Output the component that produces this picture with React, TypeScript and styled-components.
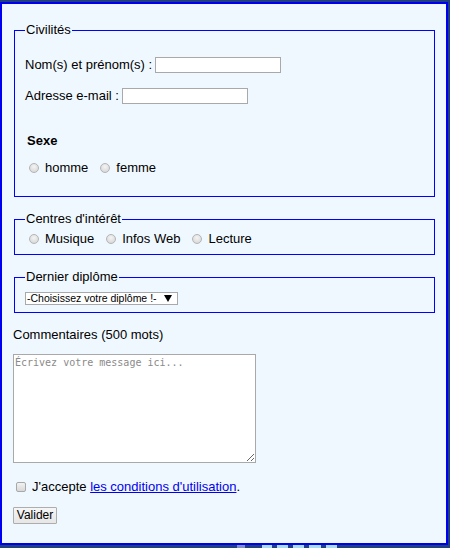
import { FC } from "react";
import styled, { createGlobalStyle } from "styled-components";

const GlobalStyle = createGlobalStyle`
  html, body {
    margin: 0;
    padding: 0;
    background-color: #22407e;
  }
  body {
    font-family: "Liberation Sans", Arial, sans-serif;
    font-size: 13px;
    color: #000;
  }
`;

const Page = styled.div`
  width: 450px;
  height: 548px;
  overflow: hidden;
  padding-top: 2px;
  box-sizing: border-box;
`;

const Panel = styled.form`
  width: 448px;
  height: 543px;
  box-sizing: border-box;
  background-color: #f0f8ff;
  border: 2px solid #0000f0;
  padding: 18px 11px 0 11px;
  display: flex;
  flex-direction: column;
  align-items: flex-start;
`;

const Fieldset = styled.fieldset<{ $top: number; $bottom: number }>`
  align-self: stretch;
  margin: ${(p) => p.$top}px 0 0 1px;
  padding: 0 10px ${(p) => p.$bottom}px 10px;
  border: 1px solid #0000ff;
  min-width: 0;
`;

const Legend = styled.legend`
  padding: 0 1px;
  margin-left: 0;
  line-height: 16px;
  font-size: 13px;
`;

const FieldRow = styled.div<{ $top: number }>`
  display: flex;
  align-items: center;
  height: 17px;
  margin-top: ${(p) => p.$top}px;
  line-height: 16px;
`;

const TextInput = styled.input`
  width: 126px;
  height: 16px;
  box-sizing: border-box;
  margin: 0 0 0 3px;
  border: 1px solid #a9a9a9;
  background: #fff;
  padding: 0 2px;
  font-size: 12px;
`;

const SubTitle = styled.div`
  margin: 29px 0 0 2px;
  font-weight: bold;
  line-height: 16px;
`;

const OptionRow = styled.div<{ $top: number }>`
  display: flex;
  align-items: center;
  height: 16px;
  margin-top: ${(p) => p.$top}px;
  line-height: 16px;
`;

const Option = styled.label`
  display: inline-flex;
  align-items: center;
  margin-right: 8px;
`;

const Radio = styled.input`
  appearance: none;
  width: 10px;
  height: 10px;
  margin: 0 6px 0 4px;
  border-radius: 50%;
  border: 1px solid #b4b4b4;
  background: radial-gradient(circle at 50% 35%, #f4f4f4 0%, #dcdcdc 70%, #cfcfcf 100%);
  box-sizing: border-box;
`;

const Checkbox = styled.input`
  appearance: none;
  width: 10px;
  height: 10px;
  margin: 0 6px 0 3px;
  border-radius: 2px;
  border: 1px solid #a8a8a8;
  background: linear-gradient(#f2f2f2, #d8d8d8);
  box-sizing: border-box;
`;

const SelectWrap = styled.div`
  position: relative;
  display: inline-flex;
  align-items: center;
  margin-top: 7px;
  height: 13px;
`;

const Select = styled.select`
  appearance: none;
  width: 153px;
  height: 13px;
  box-sizing: border-box;
  margin: 0;
  border: 1px solid #a9a9a9;
  background: #fff;
  padding: 0 0 0 1px;
  font-family: "Liberation Sans", Arial, sans-serif;
  font-size: 10.5px;
  line-height: 11px;
  color: #000;
`;

const Arrow = styled.span`
  position: absolute;
  right: 6px;
  top: 3px;
  width: 0;
  height: 0;
  border-left: 4px solid transparent;
  border-right: 4px solid transparent;
  border-top: 7px solid #000;
  pointer-events: none;
`;

const Label = styled.div`
  margin-top: 14px;
  line-height: 16px;
`;

const TextArea = styled.textarea`
  width: 243px;
  height: 109px;
  box-sizing: border-box;
  margin-top: 11px;
  border: 1px solid #a9a9a9;
  background: #fff;
  padding: 2px 1px;
  font-family: "DejaVu Sans Mono", "Liberation Mono", monospace;
  font-size: 10px;
  resize: both;

  &::placeholder {
    color: #8a8a8a;
  }
`;

const AcceptRow = styled.label`
  display: flex;
  align-items: center;
  height: 16px;
  margin-top: 16px;
  line-height: 16px;

  a {
    color: #0000ee;
    text-decoration: underline;
  }
`;

const Button = styled.button`
  margin-top: 12px;
  width: 44px;
  height: 17px;
  box-sizing: border-box;
  padding: 0;
  border: 1px solid #adadad;
  border-radius: 1px;
  background: linear-gradient(#f6f6f6, #e6e6e6);
  font-family: "Liberation Sans", Arial, sans-serif;
  font-size: 12px;
  line-height: 15px;
  color: #000;
`;

const Decor = styled.div`
  display: flex;
  height: 3px;
  padding-left: 237px;
  gap: 5px;
`;

const DecorBlock = styled.span<{ $w: number; $color: string; $gap?: number }>`
  width: ${(p) => p.$w}px;
  margin-left: ${(p) => p.$gap || 0}px;
  background: ${(p) => p.$color};
`;

const App: FC = () => {
  return (
    <Page>
      <GlobalStyle />
      <Panel onSubmit={(e) => e.preventDefault()}>
        <Fieldset $top={0} $bottom={20}>
          <Legend>Civilités</Legend>
          <FieldRow $top={18}>
            Nom(s) et prénom(s) : <TextInput type="text" />
          </FieldRow>
          <FieldRow $top={14}>
            Adresse e-mail : <TextInput type="email" />
          </FieldRow>
          <SubTitle>Sexe</SubTitle>
          <OptionRow $top={11}>
            <Option>
              <Radio type="radio" name="sexe" />
              homme
            </Option>
            <Option>
              <Radio type="radio" name="sexe" />
              femme
            </Option>
          </OptionRow>
        </Fieldset>

        <Fieldset $top={14} $bottom={7}>
          <Legend>Centres d'intérêt</Legend>
          <OptionRow $top={4}>
            <Option>
              <Radio type="radio" name="interet" />
              Musique
            </Option>
            <Option>
              <Radio type="radio" name="interet" />
              Infos Web
            </Option>
            <Option>
              <Radio type="radio" name="interet" />
              Lecture
            </Option>
          </OptionRow>
        </Fieldset>

        <Fieldset $top={14} $bottom={7}>
          <Legend>Dernier diplôme</Legend>
          <SelectWrap>
            <Select defaultValue="">
              <option value="">-Choisissez votre diplôme !-</option>
              <option value="bac">Baccalauréat</option>
              <option value="licence">Licence</option>
              <option value="master">Master</option>
            </Select>
            <Arrow />
          </SelectWrap>
        </Fieldset>

        <Label>Commentaires (500 mots)</Label>
        <TextArea placeholder="Écrivez votre message ici..." />

        <AcceptRow>
          <Checkbox type="checkbox" />
          J'accepte&nbsp;<a href="#conditions">les conditions d'utilisation</a>.
        </AcceptRow>

        <Button type="submit">Valider</Button>
      </Panel>
      <Decor>
        <DecorBlock $w={8} $color="#8090c4" />
        <DecorBlock $w={10} $color="#a8dcf4" $gap={12} />
        <DecorBlock $w={11} $color="#a8dcf4" />
        <DecorBlock $w={11} $color="#a8dcf4" />
        <DecorBlock $w={12} $color="#a8dcf4" />
        <DecorBlock $w={11} $color="#a8dcf4" />
      </Decor>
    </Page>
  );
};

export default App;
